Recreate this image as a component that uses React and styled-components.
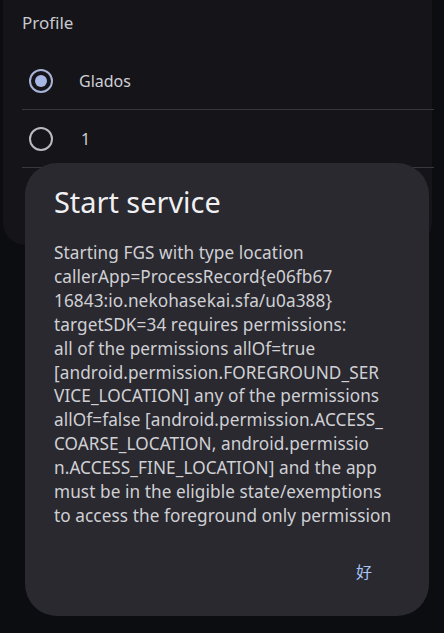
import React from "react";
import styled, { createGlobalStyle } from "styled-components";

const Global = createGlobalStyle`
  html, body {
    margin: 0;
    padding: 0;
    background: #0c0d11;
    font-family: "Noto Sans", "Noto Sans CJK SC", sans-serif;
    -webkit-font-smoothing: antialiased;
  }
  #root {
    width: 444px;
    height: 633px;
    overflow: hidden;
    position: relative;
  }
`;

const Panel = styled.section`
  margin: 0 12px 0 3px;
  height: 245px;
  background: #141419;
  border-radius: 0 0 22px 22px;
  padding: 10px 0 0 19px;
  box-sizing: border-box;
`;

const Heading = styled.div`
  color: #c9c9cf;
  font-size: 17px;
  height: 28px;
  line-height: 26px;
`;

const Options = styled.div`
  margin-top: 14px;
  margin-right: -2px;
`;

const Option = styled.div`
  display: flex;
  align-items: center;
  height: 58px;
  border-bottom: 1.5px solid #38383e;
  box-sizing: border-box;
  padding-left: 7px;
`;

const Radio = styled.span`
  width: 24px;
  height: 24px;
  border-radius: 50%;
  box-sizing: border-box;
  border: 2px solid ${(p) => (p.checked ? "#a7b2d6" : "#b9b9bf")};
  display: flex;
  align-items: center;
  justify-content: center;
  &::after {
    content: "";
    display: ${(p) => (p.checked ? "block" : "none")};
    width: 12px;
    height: 12px;
    border-radius: 50%;
    background: #a8b6e6;
  }
`;

const Label = styled.span`
  margin-left: ${(p) => p.gap}px;
  color: #cfcfd4;
  font-size: 16px;
`;

const Scrim = styled.div`
  position: absolute;
  left: 25px;
  top: 163px;
  width: 404px;
  height: 453px;
`;

const Dialog = styled.div`
  width: 100%;
  height: 100%;
  background: #29292f;
  border-radius: 32px;
  box-sizing: border-box;
  padding: 19px 14px 0 29px;
  display: flex;
  flex-direction: column;
`;

const Title = styled.h2`
  margin: 0;
  color: #f0f0f3;
  font-weight: 400;
  font-size: 28.9px;
  line-height: 40px;
`;

const Body = styled.div`
  margin-top: 19px;
  color: #d0d0d5;
  font-size: 17.2px;
  line-height: 23.9px;
  letter-spacing: 0.08px;
  white-space: nowrap;
`;

const Line = styled.div``;

const Actions = styled.div`
  display: flex;
  justify-content: flex-end;
  margin-top: 31px;
  padding-right: 43px;
`;

const TextButton = styled.button`
  background: none;
  border: none;
  padding: 0;
  color: #a9c4f5;
  font-family: "Noto Sans CJK SC", sans-serif;
  font-size: 16px;
  line-height: 24px;
  cursor: pointer;
`;

const lines = [
  "Starting FGS with type location",
  "callerApp=ProcessRecord{e06fb67",
  "16843:io.nekohasekai.sfa/u0a388}",
  "targetSDK=34 requires permissions:",
  "all of the permissions allOf=true",
  "[android.permission.FOREGROUND_SER",
  "VICE_LOCATION] any of the permissions",
  "allOf=false [android.permission.ACCESS_",
  "COARSE_LOCATION, android.permissio",
  "n.ACCESS_FINE_LOCATION]  and the app",
  "must be in the eligible state/exemptions",
  "to access the foreground only permission",
];

export default function App() {
  return (
    <>
      <Global />
      <Panel>
        <Heading>Profile</Heading>
        <Options>
          <Option>
            <Radio checked />
            <Label gap={26}>Glados</Label>
          </Option>
          <Option>
            <Radio />
            <Label gap={28}>1</Label>
          </Option>
        </Options>
      </Panel>
      <Scrim>
        <Dialog>
          <Title>Start service</Title>
          <Body>
            {lines.map((l, i) => (
              <Line key={i}>{l}</Line>
            ))}
          </Body>
          <Actions>
            <TextButton>好</TextButton>
          </Actions>
        </Dialog>
      </Scrim>
    </>
  );
}
